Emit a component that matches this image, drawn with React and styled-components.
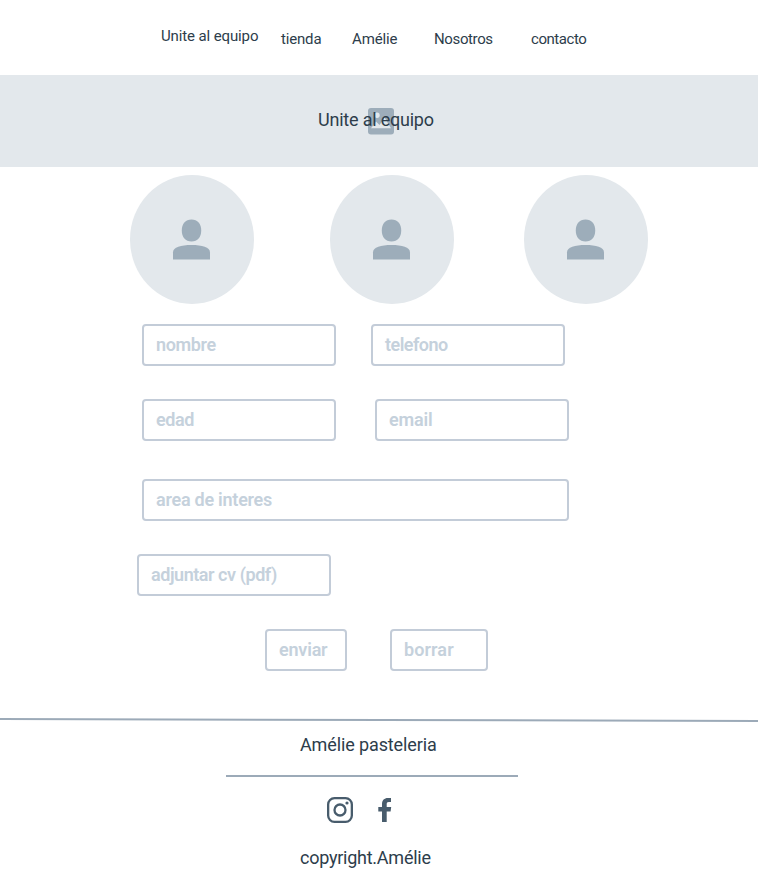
import React from "react";
import styled, { createGlobalStyle } from "styled-components";

const ink = "#2d3d4b";
const line = "#9caab8";
const pale = "#e3e8ec";
const mid = "#9dadba";
const outline = "#c3ccd8";
const hint = "#c5d1dc";
const iconInk = "#485c6c";

const GlobalStyle = createGlobalStyle`
  * { box-sizing: border-box; }
  body {
    margin: 0;
    background: #fff;
    color: ${ink};
    font-family: Roboto, "Liberation Sans", sans-serif;
  }
`;

const Page = styled.div`
  width: 758px;
  height: 890px;
  display: flex;
  flex-direction: column;
  overflow: hidden;
`;

const Nav = styled.nav`
  display: flex;
  align-items: flex-start;
  height: 75px;
  padding: 29px 0 0 161px;
`;

const NavLink = styled.a`
  flex: 0 0 ${(p) => p.$width}px;
  margin-top: ${(p) => (p.$raised ? "-3px" : "0")};
  font-size: 15px;
  line-height: 20px;
  letter-spacing: ${(p) => p.$tracking || 0}px;
  white-space: nowrap;
`;

const Banner = styled.header`
  display: grid;
  flex: none;
  height: 92px;
  background: ${pale};
`;

const BannerIcon = styled.svg`
  grid-area: 1 / 1;
  width: 26px;
  height: 27px;
  margin: 33px 0 0 368px;
`;

const BannerTitle = styled.h1`
  grid-area: 1 / 1;
  margin: 35px 0 0 318px;
  font-size: 18px;
  font-weight: 400;
  line-height: 20px;
  letter-spacing: -0.21px;
  z-index: 1;
`;

const Team = styled.section`
  display: grid;
  grid-template-columns: 200px 194px 124px;
  padding: 8px 0 0 130px;
`;

const Avatar = styled.div`
  display: flex;
  width: 124px;
  height: 129px;
  padding: 44px 0 0 42px;
  border-radius: 50%;
  background: ${pale};
`;

const Form = styled.form`
  display: flex;
  flex-direction: column;
  padding-top: 20px;
`;

const Row = styled.div`
  display: flex;
  gap: ${(p) => p.$gap || 0}px;
  margin-bottom: ${(p) => p.$after || 0}px;
  padding-left: ${(p) => p.$indent}px;
`;

const Field = styled.label`
  display: block;
  width: ${(p) => p.$width || 194}px;
  height: 42px;
  padding-left: 12px;
  border: 2px solid ${outline};
  border-radius: 4px;
  color: ${hint};
  font-size: 18px;
  font-weight: 600;
  line-height: 38px;
  letter-spacing: ${(p) => p.$tracking || 0}px;
  white-space: nowrap;
`;

const Button = styled.button`
  width: ${(p) => p.$width}px;
  height: 42px;
  padding: 0 0 0 12px;
  border: 2px solid ${outline};
  border-radius: 4px;
  background: none;
  color: ${hint};
  font: 600 18px/38px Roboto, "Liberation Sans", sans-serif;
  letter-spacing: ${(p) => p.$tracking || 0}px;
  text-align: left;
`;

const Footer = styled.footer`
  display: flex;
  flex-direction: column;
  margin-top: 46px;
`;

const Slope = styled.svg`
  display: block;
  width: 758px;
  height: 6px;
`;

const FooterText = styled.p`
  margin: ${(p) => p.$before}px 0 0 300px;
  font-size: 18px;
  line-height: 20px;
  letter-spacing: ${(p) => p.$tracking}px;
`;

const Rule = styled.hr`
  width: 292px;
  height: 2px;
  margin: 20px 0 0 226px;
  border: 0;
  background: ${line};
`;

const Social = styled.div`
  display: flex;
  gap: 25px;
  height: 26px;
  margin: 20px 0 0 327px;
`;

const Person = () => (
  <svg width="40" height="41" viewBox="0 0 40 41" fill={mid}>
    <path d="M19.500 .5C25.600 .5 29.200 4.800 29.200 11.500S25.600 22.500 19.500 22.500 9.800 18.200 9.800 11.500 13.400 .5 19.500 .5Z" />
    <path d="M1 40.500V33.500C1 28 9 26 19.500 26S38 28 38 33.500v7Z" />
  </svg>
);

const Instagram = () => (
  <svg width="26" height="26" viewBox="0 0 26 26" fill="none" stroke={iconInk}>
    <rect x="1.150" y="1.150" width="23.700" height="23.700" rx="6.300" strokeWidth="2.300" />
    <circle cx="13" cy="13" r="5.500" strokeWidth="2.300" />
    <circle cx="20" cy="6" r="1.600" fill={iconInk} stroke="none" />
  </svg>
);

const Facebook = () => (
  <svg width="14" height="26" viewBox="0 0 14 26" fill={iconInk}>
    <path d="M4 25V14.500H.3V10H4V7.200C4 3 6.300.9 9.900.9c1.300 0 2.500.1 3.100.2v4h-2.200C9.100 5.100 8.700 6 8.700 7.300V10h4.500l-.6 4.500H8.700V25Z" />
  </svg>
);

export default function App() {
  return (
    <>
      <GlobalStyle />
      <Page>
        <Nav>
          <NavLink $width={120} $raised $tracking={-0.12}>Unite al equipo</NavLink>
          <NavLink $width={71} $tracking={-0.17}>tienda</NavLink>
          <NavLink $width={82} $tracking={-0.15}>Amélie</NavLink>
          <NavLink $width={97} $tracking={-0.37}>Nosotros</NavLink>
          <NavLink $width={60} $tracking={-0.45}>contacto</NavLink>
        </Nav>
        <Banner>
          <BannerIcon viewBox="0 0 26 27">
            <rect width="26" height="26.500" rx="3" fill={mid} />
            <circle cx="9" cy="7.200" r="2.700" fill={pale} />
            <path d="M3 20.300 8 13.500l3.500 3.600L16.500 9.500 23 20.300Z" fill={pale} />
          </BannerIcon>
          <BannerTitle>Unite al equipo</BannerTitle>
        </Banner>
        <Team>
          <Avatar><Person /></Avatar>
          <Avatar><Person /></Avatar>
          <Avatar><Person /></Avatar>
        </Team>
        <Form>
          <Row $indent={142} $gap={35} $after={33}>
            <Field $tracking={-0.35}>nombre</Field>
            <Field $tracking={-0.55}>telefono</Field>
          </Row>
          <Row $indent={142} $gap={39} $after={38}>
            <Field $tracking={-0.4}>edad</Field>
            <Field $tracking={-0.15}>email</Field>
          </Row>
          <Row $indent={142} $after={33}>
            <Field $width={427} $tracking={-0.25}>area de interes</Field>
          </Row>
          <Row $indent={137} $after={33}>
            <Field $tracking={-0.45}>adjuntar cv (pdf)</Field>
          </Row>
          <Row $indent={265} $gap={43}>
            <Button type="button" $width={82} $tracking={-0.2}>enviar</Button>
            <Button type="button" $width={98} $tracking={0.1}>borrar</Button>
          </Row>
        </Form>
        <Footer>
          <Slope viewBox="0 0 758 6">
            <path d="M0 2 758 4" stroke={line} strokeWidth="2" />
          </Slope>
          <FooterText $before={12} $tracking={-0.12}>Amélie pasteleria</FooterText>
          <Rule />
          <Social>
            <Instagram />
            <Facebook />
          </Social>
          <FooterText $before={25} $tracking={-0.25}>copyright.Amélie</FooterText>
        </Footer>
      </Page>
    </>
  );
}
